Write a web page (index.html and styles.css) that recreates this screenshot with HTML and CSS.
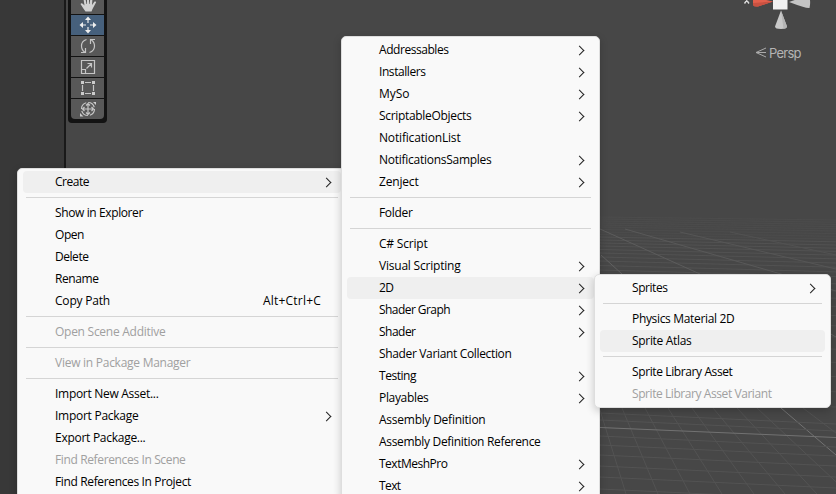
FILE: index.html
```html
<!DOCTYPE html>
<html lang="en">
<head>
<meta charset="utf-8">
<title>Scene view</title>
<link rel="stylesheet" href="styles.css">
</head>
<body>
<main class="editor">
  <aside class="dock"></aside>
  <section class="scene">
    <svg class="grid" width="236" height="284" viewBox="600 210 236 284" id="grid"></svg>
    <svg class="gizmo" width="90" height="64" viewBox="740 0 90 64">
      <path d="M744.500 -3l4.500 6.500M749 -3l-4.500 6.500" stroke="#ddd" stroke-width="1.4"/>
      <path d="M753 -3L773 1.500L758 6.500Q754 7 753 5Z" fill="#e35f4c"/>
      <path d="M753 3L773 1.500L758 6.500Q754 7 753 5Z" fill="#c95141"/>
      <path d="M789 2L809 -5Q811 2 809.500 8Q806 8.500 789 2Z" fill="#c4c4c4"/>
      <path d="M773 0H787.500V9.500H773Z" fill="#f0f0f0"/>
      <path d="M781 10.500L775 26.500Q775 29 781 29Q787 29 787 26.500Z" fill="#c9c9c9"/>
      <path d="M781 10.500L783.500 28.800Q787 28 787 26.500Z" fill="#b5b5b5"/>
      <path d="M766 48L756 52.500L766 57M756 52.500H766" fill="none" stroke="#aaa"/>
      <text x="769" y="57.500" class="persp" textLength="32.500">Persp</text>
    </svg>
    <div class="tools">
      <div class="tool"><svg viewBox="0 0 32 20"><path d="M9.500 10Q10.500 8.500 12 10L13.500 11.500L12.500 5H14.500L15.500 10H16V3H18V10H18.500L19.500 4H21.500L21 11L23.500 7.500Q25.500 7 25 8.500L21.500 15L20.500 17.500H14.500Q12.500 15 9.500 10Z" fill="#d2d2d2" stroke="none"/></svg></div>
      <div class="tool active"><svg viewBox="0 0 32 20"><path d="M17 4V8M17 12V16M11 10H15M19 10H23" /><path d="M17 1.500L20 5H14ZM17 18.500L20 15H14ZM8.500 10L12 7V13ZM25.500 10L22 7V13Z" fill="#eee" stroke="none"/></svg></div>
      <div class="tool"><svg viewBox="0 0 32 20"><path d="M15.500 3.500Q10.500 5 10.500 10Q10.500 14 14 16.500M10 16.500H14.500V12M18.500 16.500Q23.500 15 23.500 10Q23.500 6 20 3.500M24 3.500H19.500V8"/></svg></div>
      <div class="tool"><svg viewBox="0 0 32 20"><path d="M10.500 3.500H23.500V16.500H10.500ZM10.500 12.500H14.500V16.500M15.500 11.500L20.500 6.500M16.500 6.500H20.500V10.500"/></svg></div>
      <div class="tool"><svg viewBox="0 0 32 20"><path d="M14 4.500H20M14 15.500H20M11.500 7V13M22.500 7V13"/><path d="M10 3H13V6H10ZM21 3H24V6H21ZM10 14H13V17H10ZM21 14H24V17H21Z" fill="#ccc" stroke="none"/></svg></div>
      <div class="tool"><svg viewBox="0 0 32 20"><circle cx="17" cy="10" r="6.500" stroke-dasharray="8 2"/><path d="M17 5V15M12 10H22M15 6.500L17 4.500L19 6.500M15 13.500L17 15.500L19 13.500M13.500 8L11.500 10L13.500 12M20.500 8L22.500 10L20.500 12"/><path d="M22 3H25V6ZM9 14V17.500H12.500Z" fill="#ccc" stroke="none"/></svg></div>
    </div>
  </section>
</main>

<nav class="menu assets">
  <div class="item hover sub"><span data-w="34">Create</span></div>
  <hr>
  <div class="item"><span data-w="88">Show in Explorer</span></div>
  <div class="item"><span data-w="29">Open</span></div>
  <div class="item"><span data-w="33.500">Delete</span></div>
  <div class="item"><span data-w="43.500">Rename</span></div>
  <div class="item"><span data-w="55">Copy Path</span><kbd data-w="58">Alt+Ctrl+C</kbd></div>
  <hr>
  <div class="item off"><span data-w="110.500">Open Scene Additive</span></div>
  <hr>
  <div class="item off"><span data-w="135.500">View in Package Manager</span></div>
  <hr>
  <div class="item"><span data-w="103.500">Import New Asset...</span></div>
  <div class="item sub"><span data-w="83.500">Import Package</span></div>
  <div class="item"><span data-w="90.500">Export Package...</span></div>
  <div class="item off"><span data-w="130.500">Find References In Scene</span></div>
  <div class="item"><span data-w="136">Find References In Project</span></div>
  <div class="item"></div>
</nav>

<nav class="menu create">
  <div class="item sub"><span data-w="69.500">Addressables</span></div>
  <div class="item sub"><span data-w="46.500">Installers</span></div>
  <div class="item sub"><span data-w="30.500">MySo</span></div>
  <div class="item sub"><span data-w="92.500">ScriptableObjects</span></div>
  <div class="item"><span data-w="81.500">NotificationList</span></div>
  <div class="item sub"><span data-w="112.500">NotificationsSamples</span></div>
  <div class="item sub"><span data-w="39.500">Zenject</span></div>
  <hr>
  <div class="item"><span data-w="33.500">Folder</span></div>
  <hr>
  <div class="item"><span data-w="48.500">C# Script</span></div>
  <div class="item sub"><span data-w="81.500">Visual Scripting</span></div>
  <div class="item hover sub"><span data-w="14.500">2D</span></div>
  <div class="item sub"><span data-w="71">Shader Graph</span></div>
  <div class="item sub"><span data-w="36.500">Shader</span></div>
  <div class="item"><span data-w="132.500">Shader Variant Collection</span></div>
  <div class="item sub"><span data-w="37">Testing</span></div>
  <div class="item sub"><span data-w="49.500">Playables</span></div>
  <div class="item"><span data-w="106.500">Assembly Definition</span></div>
  <div class="item"><span data-w="161.500">Assembly Definition Reference</span></div>
  <div class="item sub"><span data-w="68.500">TextMeshPro</span></div>
  <div class="item sub"><span data-w="21.500">Text</span></div>
</nav>

<nav class="menu two-d">
  <div class="item sub"><span data-w="35.500">Sprites</span></div>
  <hr>
  <div class="item"><span data-w="102.500">Physics Material 2D</span></div>
  <div class="item hover"><span data-w="59.500">Sprite Atlas</span></div>
  <hr>
  <div class="item"><span data-w="100.500">Sprite Library Asset</span></div>
  <div class="item off"><span data-w="139.500">Sprite Library Asset Variant</span></div>
</nav>
<script src="scene.js"></script>
</body>
</html>
```
FILE: styles.css
```css
* { box-sizing: border-box; }
body {
  margin: 0;
  width: 836px;
  height: 494px;
  overflow: hidden;
  position: relative;
  background: #474747;
  font: 12px/22px "Open Sans", "Noto Sans", sans-serif;
}
.editor { display: flex; height: 494px; }
.dock { width: 66px; background: #383838; border-right: 2px solid #191919; }
.scene { flex: 1; position: relative; background: #474747; overflow: hidden; }
.grid { position: absolute; right: 0; bottom: 0; }
.gizmo { position: absolute; right: 6px; top: 0; }
.persp { font: 13px Inter, sans-serif; fill: #b4b4b4; }
.tools {
  width: 39px;
  height: 123px;
  margin-left: 2px;
  padding: 0 3px 4px;
  display: flex;
  flex-direction: column;
  justify-content: flex-end;
  gap: 1px;
  background: #131313;
  border-radius: 0 0 4px 4px;
}
.tool { height: 20px; flex: none; background: #585858; }
.tool:last-child { border-radius: 0 0 4px 4px; }
.tool.active { background: #46607c; }
.tool svg { display: block; width: 32px; height: 20px; fill: none; stroke: #c6c6c6; stroke-width: 1.2; }
.tool.active svg { stroke: #eee; }

.menu {
  position: absolute;
  padding: 2px 5px;
  background: #f9f9f9;
  border: 1px solid #dedede;
  border-radius: 5px;
  box-shadow: 0 3px 9px rgba(0, 0, 0, .2);
  color: #000;
}
.assets { left: 17px; top: 168px; width: 330px; }
.create { left: 341px; top: 36px; width: 259px; }
.two-d { left: 594px; top: 274px; width: 237px; }
.item {
  height: 22px;
  padding: 0 20px 0 32px;
  display: flex;
  justify-content: space-between;
  align-items: center;
  border-radius: 4px;
  white-space: nowrap;
}
.hover { background: #efefef; }
.off { color: #a0a0a0; }
.item kbd { font: inherit; }
.sub { padding-right: 11px; }
.sub::after {
  content: "";
  width: 6px;
  height: 6px;
  margin-top: 1px;
  border: solid #222;
  border-width: 1.5px 1.5px 0 0;
  transform: rotate(45deg);
}
hr { height: 1px; margin: 4px 3px; border: 0; background: #d5d5d5; }
```
FILE: scene.js
```js
const NS = "http://www.w3.org/2000/svg";
const grid = document.getElementById("grid");
function line(x1, y1, x2, y2, color) {
  const l = document.createElementNS(NS, "line");
  Object.entries({ x1, y1, x2, y2, stroke: color, "stroke-width": 1 })
    .forEach(([k, v]) => l.setAttribute(k, v));
  grid.appendChild(l);
}
// Haze of far lines below the horizon
[217, 219, 221, 223, 225, 227, 229.5, 232, 234.5, 237, 240, 243, 246, 249.5, 253, 257, 261, 265.5, 270,
 277, 284, 291, 299, 308, 318, 329, 341, 354, 368, 383, 398]
  .forEach((y, i) => line(600, y, 836, y + 3 + i * 0.2, i < 9 ? "#4c4c4c" : "#525252"));
// Far diagonals
line(600, 229, 700, 274, "#5c5c5c");
line(601, 255, 622, 274, "#606060");
line(625, 229, 781, 274, "#595959");
line(680, 232, 836, 269, "#565656");
line(730, 232, 836, 255, "#525252");
line(781, 274, 836, 291, "#595959");
line(829, 333, 836, 337, "#606060");
// Near lines receding to the left
[[600, 410, 626], [622, 408, 658], [645, 408, 690], [668, 408, 722], [692, 408, 754],
 [713, 408, 785], [737, 408, 817], [757, 408, 849]]
  .forEach(([x, y, x2]) => line(x, y, x2, 494, "#535353"));
line(781, 408, 836, 455, "#727272");
line(803, 408, 836, 433, "#535353");
// Near lines across the view
[413, 420, 436, 445, 455, 466, 477, 489].forEach(y => line(600, y, 836, y + 11, "#535353"));
line(600, 427.5, 836, 437.5, "#727272");

document.querySelectorAll("[data-w]").forEach(el => {
  const gap = (Number(el.dataset.w) - el.getBoundingClientRect().width) / el.textContent.length;
  el.style.letterSpacing = gap.toFixed(3) + "px";
});
```
